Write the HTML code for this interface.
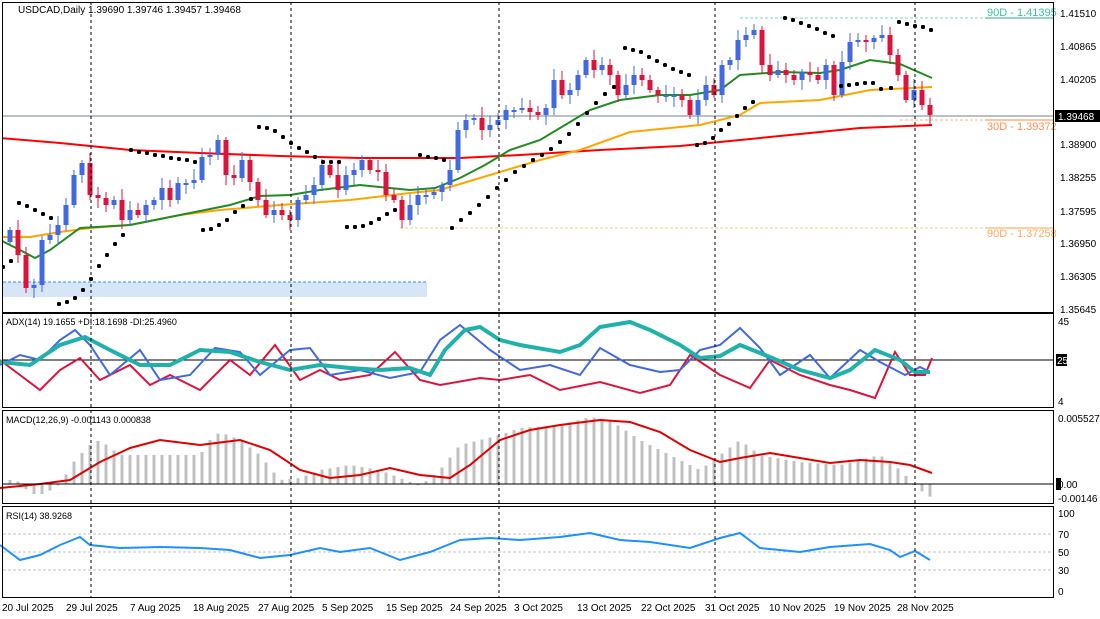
<!DOCTYPE html>
<html><head><meta charset="utf-8"><style>
html,body{margin:0;padding:0;background:#fff;}
svg{display:block;font-family:"Liberation Sans",sans-serif;font-size:10px;}
</style></head><body>
<svg id="s" width="1100" height="619" viewBox="0 0 1100 619" xmlns="http://www.w3.org/2000/svg">
<rect width="1100" height="619" fill="#fff"/>
<defs><clipPath id="cm"><rect x="3" y="3" width="1050" height="309"/></clipPath></defs>
<rect x="3" y="282" width="424" height="15" fill="#d6e6f7"/>
<line x1="3" y1="282" x2="427" y2="282" stroke="#3c8de0" stroke-dasharray="3,2"/>
<line x1="3" y1="116" x2="1054" y2="116" stroke="#708090"/>
<line x1="740" y1="18" x2="985" y2="18" stroke="#7fd8c0" stroke-dasharray="3,2"/>
<line x1="985" y1="18" x2="1054" y2="18" stroke="#20b08a"/>
<line x1="900" y1="120" x2="985" y2="120" stroke="#ffb07a" stroke-dasharray="3,2"/>
<line x1="985" y1="120" x2="1054" y2="120" stroke="#ff8c3a"/>
<line x1="400" y1="228" x2="985" y2="228" stroke="#ffc080" stroke-dasharray="3,2"/>
<line x1="985" y1="228" x2="1054" y2="228" stroke="#ffa040"/>
<g id="main" clip-path="url(#cm)"></g>
<text x="987" y="16" fill="#3cc0a0" font-size="11">90D - 1.41395</text>
<text x="987" y="130" fill="#ff9050" font-size="11">30D - 1.39372</text>
<text x="987" y="237" fill="#ffa860" font-size="11">90D - 1.37258</text>
<text x="18" y="13" fill="#000" font-size="10">USDCAD,Daily  1.39690 1.39746 1.39457 1.39468</text>
<line x1="3" y1="360" x2="1054" y2="360" stroke="#000"/>
<g id="adx"></g>
<text x="6" y="325" font-size="9">ADX(14) 19.1655 +DI:18.1698 -DI:25.4960</text>
<g id="macd"></g>
<line x1="3" y1="484" x2="1054" y2="484" stroke="#000"/>
<text x="6" y="423" font-size="9">MACD(12,26,9) -0.001143 0.000838</text>
<line x1="3" y1="534" x2="1054" y2="534" stroke="#c0c0c0" stroke-dasharray="3,2"/>
<line x1="3" y1="552" x2="1054" y2="552" stroke="#c0c0c0" stroke-dasharray="3,2"/>
<line x1="3" y1="570" x2="1054" y2="570" stroke="#c0c0c0" stroke-dasharray="3,2"/>
<g id="rsi"></g>
<text x="6" y="519" font-size="9">RSI(14) 38.9268</text>
<g stroke="#000" stroke-dasharray="3,3">
<line x1="91" y1="2" x2="91" y2="598"/><line x1="291" y1="2" x2="291" y2="598"/><line x1="499" y1="2" x2="499" y2="598"/><line x1="715" y1="2" x2="715" y2="598"/><line x1="915" y1="2" x2="915" y2="598"/>
</g>
<g fill="none" stroke="#000">
<rect x="2.5" y="2.5" width="1051" height="310"/>
<rect x="2.5" y="313.5" width="1051" height="94"/>
<rect x="2.5" y="410.5" width="1051" height="93"/>
<rect x="2.5" y="506.5" width="1051" height="91"/>
</g>
<g font-size="10" fill="#000">
<text x="1060" y="17">1.41510</text><text x="1060" y="50">1.40865</text><text x="1060" y="83">1.40205</text><text x="1060" y="148">1.38900</text><text x="1060" y="181">1.38255</text><text x="1060" y="215">1.37595</text><text x="1060" y="247">1.36950</text><text x="1060" y="280">1.36305</text><text x="1060" y="313">1.35645</text>
<rect x="1055" y="110" width="45" height="12" fill="#000"/><text x="1058" y="120" fill="#fff">1.39468</text>
<text x="1058" y="325">45</text><rect x="1056" y="354" width="11" height="12" fill="#000"/><text x="1057" y="364" fill="#fff">25</text><text x="1058" y="405">4</text>
<text x="1058" y="422">0.005527</text><rect x="1056" y="478" width="5" height="12" fill="#000"/><text x="1058" y="488">0.00</text><text x="1058" y="502">-0.00146</text>
<text x="1058" y="517">100</text><text x="1058" y="538">70</text><text x="1058" y="556">50</text><text x="1058" y="574">30</text><text x="1058" y="595">0</text>
<text x="2" y="611">20 Jul 2025</text><text x="66" y="611">29 Jul 2025</text><text x="130" y="611">7 Aug 2025</text><text x="193" y="611">18 Aug 2025</text><text x="258" y="611">27 Aug 2025</text><text x="322" y="611">5 Sep 2025</text><text x="386" y="611">15 Sep 2025</text><text x="450" y="611">24 Sep 2025</text><text x="514" y="611">3 Oct 2025</text><text x="577" y="611">13 Oct 2025</text><text x="641" y="611">22 Oct 2025</text><text x="705" y="611">31 Oct 2025</text><text x="769" y="611">10 Nov 2025</text><text x="834" y="611">19 Nov 2025</text><text x="897" y="611">28 Nov 2025</text>
</g>
</svg>
<script>
(function(){
var NS="http://www.w3.org/2000/svg";
function el(p,t,a){var e=document.createElementNS(NS,t);for(var k in a)e.setAttribute(k,a[k]);p.appendChild(e);return e;}
function pts(a){var s=[];for(var i=0;i<a.length;i+=2)s.push(a[i]+","+a[i+1]);return s.join(" ");}
var m=document.getElementById("main");
el(m,"polyline",{points:pts([0,138,60,143,130,150,200,153,280,156,360,158,420,158,460,158,520,155,600,150,680,146,740,140,800,134,860,128,932,125]),fill:"none",stroke:"#f00","stroke-width":2});
el(m,"polyline",{points:pts([0,237,30,237,60,232,90,228,130,225,180,215,220,210,280,205,350,200,410,193,440,190,490,175,540,160,580,150,630,132,700,125,740,115,760,103,820,100,870,90,932,87]),fill:"none",stroke:"#ffa500","stroke-width":2});
el(m,"polyline",{points:pts([0,240,20,250,35,258,50,250,80,228,130,225,180,215,230,205,260,196,290,195,320,190,360,185,410,190,435,188,460,178,485,165,510,150,540,140,560,128,590,110,620,100,660,95,690,95,720,90,740,75,780,72,820,73,840,70,870,60,900,64,932,78]),fill:"none",stroke:"#228b22","stroke-width":2});
var C=[230,255,288,285,240,235,225,205,175,163,195,198,205,200,220,210,215,205,200,188,200,183,183,180,157,155,140,175,178,160,182,200,215,210,215,220,200,195,185,165,175,190,175,170,160,170,172,195,200,220,205,195,195,192,185,170,130,120,118,130,125,120,110,110,108,112,115,108,80,95,90,75,60,70,65,75,95,85,75,80,90,95,95,95,100,115,100,85,95,65,60,40,35,30,65,75,70,75,80,72,75,80,65,95,62,42,40,42,38,35,55,75,100,90,105,115];
var op=242;
for(var i=0;i<C.length;i++){var cx=10+8*i,cl=C[i];var tp=Math.min(op,cl),bt=Math.max(op,cl);if(bt-tp<2){bt=tp+2;}
 var col=cl>op?"#dc143c":"#4169e1";var w1=3+(i*7)%9,w2=3+(i*5)%8;
 el(m,"line",{x1:cx,y1:tp-w1,x2:cx,y2:bt+w2,stroke:col});
 el(m,"rect",{x:cx-2.5,y:tp,width:5,height:bt-tp,fill:col});op=cl;}
var P=[3,267,11,261,19,203,27,206,35,210,43,214,51,218,59,304,67,302,75,298,83,290,91,279,99,266,107,255,115,244,123,235,131,150,139,152,147,153,155,155,163,156,171,158,179,159,187,160,195,162,203,230,211,229,219,225,227,220,235,212,243,206,251,199,259,127,267,128,275,131,283,137,291,143,299,148,307,152,315,157,323,162,331,162,339,162,347,227,355,227,363,226,371,223,379,219,387,214,395,210,420,155,428,157,436,158,444,160,452,228,461,220,470,213,479,205,488,197,497,188,506,180,515,172,524,166,533,160,542,155,551,149,560,142,569,134,578,124,587,113,596,103,605,94,614,87,625,48,633,50,641,52,649,57,657,61,665,65,673,69,681,72,689,75,697,145,705,143,713,138,721,130,729,124,737,116,745,108,753,102,785,18,793,20,801,23,809,26,817,29,825,33,833,36,841,86,849,85,857,84,865,83,873,83,881,89,891,88,899,22,907,24,915,26,923,27,931,30];
for(var i=0;i<P.length;i+=2)el(m,"rect",{x:P[i]-2,y:P[i+1]-2,width:4,height:4,rx:1.5,fill:"#000"});
var a=document.getElementById("adx");
el(a,"polyline",{points:pts([0,360,20,375,40,390,60,370,80,358,100,380,130,365,150,385,170,375,200,390,230,360,250,375,275,345,300,380,320,370,340,380,370,375,395,352,420,380,440,385,480,378,500,380,530,375,560,390,600,382,640,393,670,385,690,355,720,375,750,388,770,360,800,375,830,385,850,390,875,398,895,352,910,375,925,375,932,358]),fill:"none",stroke:"#dc143c","stroke-width":2});
el(a,"polyline",{points:pts([0,365,20,355,40,360,60,340,75,330,90,345,110,375,140,350,160,380,190,375,215,348,240,352,260,375,290,350,310,348,330,375,360,370,390,378,420,372,440,340,460,325,490,350,520,370,550,365,580,375,600,348,630,365,660,372,680,370,700,350,720,345,740,328,760,348,780,375,810,355,830,378,860,350,880,362,905,375,920,367,930,372]),fill:"none",stroke:"#4169e1","stroke-width":2});
el(a,"polyline",{points:pts([0,362,30,365,60,345,85,337,110,350,140,365,170,365,200,350,230,352,260,362,290,370,320,365,350,368,380,370,410,368,430,375,445,350,465,330,480,327,500,340,520,345,560,352,580,345,600,327,630,322,650,330,680,345,700,358,720,356,740,345,770,357,800,370,830,378,850,370,875,350,900,360,915,372,930,372]),fill:"none",stroke:"#20b2aa","stroke-width":4});
var g=document.getElementById("macd");
var H=[0,478,20,482,30,494,45,494,60,484,75,460,90,445,100,440,120,455,200,455,210,440,220,432,240,440,260,455,280,480,300,478,320,470,350,465,380,470,400,478,420,486,440,470,460,445,480,440,500,435,520,428,560,425,590,417,610,420,640,440,680,460,700,470,720,455,740,440,760,455,800,462,840,465,860,460,880,455,900,470,910,480,920,490,932,498];
function interp(arr,x){for(var i=0;i<arr.length-2;i+=2){if(x>=arr[i]&&x<=arr[i+2]){var t=(x-arr[i])/(arr[i+2]-arr[i]);return arr[i+1]+t*(arr[i+3]-arr[i+1]);}}return arr[arr.length-1];}
for(var i=0;i<C.length;i++){var hx=10+8*i,hy=interp(H,hx);var t1=Math.min(hy,484),b1=Math.max(hy,484);el(g,"rect",{x:hx-1.5,y:t1,width:3,height:Math.max(b1-t1,1),fill:"#c0c0c0"});}
el(g,"polyline",{points:pts([0,488,40,484,70,480,100,462,130,448,160,440,200,445,240,440,270,450,300,470,330,478,360,475,390,468,420,475,450,478,470,465,500,440,530,430,560,425,600,420,630,422,660,432,690,450,720,462,740,458,770,453,800,458,830,463,860,460,890,462,910,465,932,473]),fill:"none",stroke:"#e00000","stroke-width":2});
el(document.getElementById("rsi"),"polyline",{points:pts([0,545,20,560,40,555,60,545,80,537,90,545,120,548,160,547,200,548,230,550,260,558,290,555,320,548,340,552,370,548,400,560,430,552,460,540,490,538,520,540,560,537,590,533,620,540,650,542,690,548,720,538,740,533,760,548,800,552,830,547,870,544,890,550,900,557,915,551,930,560]),fill:"none",stroke:"#1e90ff","stroke-width":2});
})();
</script>
</body></html>
